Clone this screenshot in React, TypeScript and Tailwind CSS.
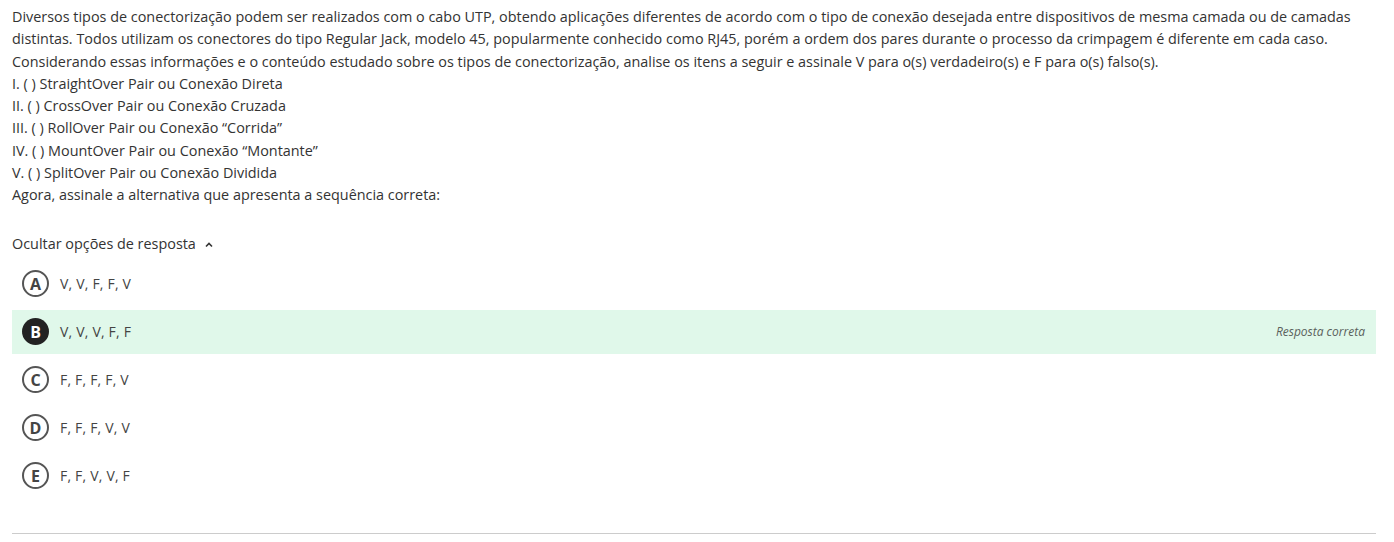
import React from "react";

const options = [
  { l: "A", t: "V, V, F, F, V" },
  { l: "B", t: "V, V, V, F, F", correct: true },
  { l: "C", t: "F, F, F, F, V" },
  { l: "D", t: "F, F, F, V, V" },
  { l: "E", t: "F, F, V, V, F" },
];

export default function App() {
  return (
    <div
      className="w-[1394px] h-[542px] bg-white pl-3 pr-[18px] pt-[6px] text-[14.4px] text-[#333]"
      style={{ fontFamily: '"Open Sans", "Noto Sans", sans-serif' }}
    >
      <div className="leading-[22.3px]">
        <p>
          Diversos tipos de conectorização podem ser realizados com o cabo UTP, obtendo aplicações diferentes de acordo com o tipo de conexão desejada entre dispositivos de mesma camada ou de camadas distintas. Todos utilizam os conectores do tipo Regular Jack, modelo 45, popularmente conhecido como RJ45, porém a ordem dos pares durante o processo da crimpagem é diferente em cada caso.
        </p>
        <p>
          Considerando essas informações e o conteúdo estudado sobre os tipos de conectorização, analise os itens a seguir e assinale V para o(s) verdadeiro(s) e F para o(s) falso(s).
        </p>
        <p>I. ( ) StraightOver Pair ou Conexão Direta</p>
        <p>II. ( ) CrossOver Pair ou Conexão Cruzada</p>
        <p>III. ( ) RollOver Pair ou Conexão “Corrida”</p>
        <p>IV. ( ) MountOver Pair ou Conexão “Montante”</p>
        <p>V. ( ) SplitOver Pair ou Conexão Dividida</p>
        <p>Agora, assinale a alternativa que apresenta a sequência correta:</p>
      </div>
      <div className="mt-[26px] flex items-center gap-[8px] leading-[22px]">
        <span>Ocultar opções de resposta</span>
        <svg width="10" height="10" viewBox="0 0 10 10" className="mt-[2px]">
          <path d="M2 6.5 L5 3.5 L8 6.5" fill="none" stroke="#333" strokeWidth="1.6" />
        </svg>
      </div>
      <div className="mt-[7px] flex flex-col gap-[4px]">
        {options.map((o) => (
          <div
            key={o.l}
            className={`h-[44px] flex items-center pl-[10px] pr-[11px] ${o.correct ? "bg-[#e0f8ea]" : ""}`}
          >
            <div
              className={`w-[27px] h-[27px] rounded-full flex items-center justify-center text-[16px] font-bold leading-none ${
                o.correct ? "bg-[#222] text-white" : "border-2 border-[#555] text-[#444]"
              }`}
            >
              {o.l}
            </div>
            <span className="ml-[11px] text-[#444] text-[14px] tracking-[0.2px]">{o.t}</span>
            {o.correct && (
              <span className="ml-auto italic text-[12px] text-[#5a615c]">Resposta correta</span>
            )}
          </div>
        ))}
      </div>
      <div className="mt-[35px] h-px bg-[#cccccc]" />
    </div>
  );
}
